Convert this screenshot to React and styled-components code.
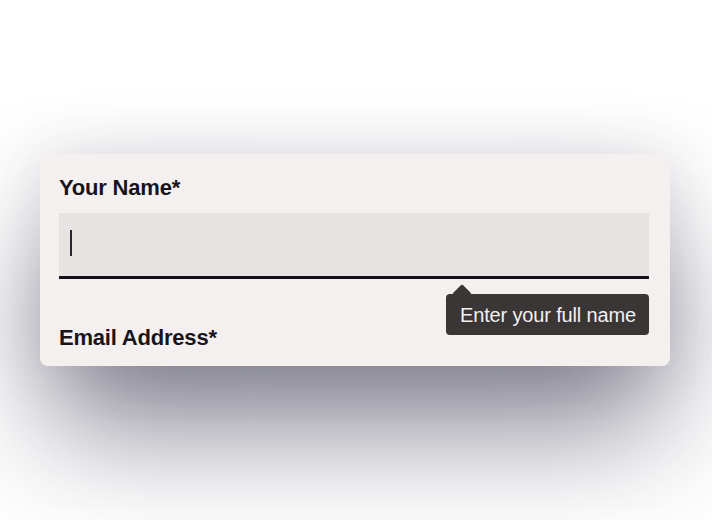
import React from "react";
import styled, { createGlobalStyle } from "styled-components";

const Global = createGlobalStyle`
  html, body { margin: 0; padding: 0; background: #ffffff; }
  body { font-family: "Liberation Sans", Arial, sans-serif; -webkit-font-smoothing: antialiased; }
  * { box-sizing: border-box; }
`;

const Page = styled.div`
  width: 712px;
  height: 520px;
  padding: 154px 42px 0 40px;
  overflow: hidden;
`;

const Card = styled.form`
  width: 630px;
  background: #f3f0ef;
  border-radius: 8px;
  padding: 22px 21px 16px 19px;
  display: flex;
  flex-direction: column;
  box-shadow: 0 70px 120px -10px rgba(50, 48, 72, 0.62), 0 0 60px rgba(60, 58, 80, 0.14);
`;

const Label = styled.label`
  display: block;
  font-size: 22px;
  line-height: 24px;
  font-weight: 700;
  letter-spacing: -0.2px;
  color: #17141c;
`;

const Field = styled.div`
  position: relative;
  margin-top: 13px;
  margin-bottom: 47px;
`;

const InputBox = styled.div`
  height: 66px;
  background: #e7e3e2;
  border-bottom: 3px solid #15111c;
  display: flex;
  align-items: center;
  padding: 0 0 4px 11px;
`;

const Caret = styled.span`
  display: block;
  width: 1.5px;
  height: 26px;
  background: #2a262e;
`;

const Tooltip = styled.div`
  position: absolute;
  top: 81px;
  right: 0;
  height: 41px;
  padding: 0 13px 0 14px;
  display: flex;
  align-items: center;
  background: #3a3636;
  color: #f4f0ef;
  border-radius: 4px;
  font-size: 20px;
  letter-spacing: -0.15px;
  white-space: nowrap;
  &::before {
    content: "";
    position: absolute;
    left: 9px;
    top: -7px;
    width: 14px;
    height: 14px;
    background: #3a3636;
    border-radius: 2px;
    transform: rotate(45deg);
  }
`;

const TipText = styled.span`
  position: relative;
  padding-top: 1px;
`;

export default function App() {
  return (
    <>
      <Global />
      <Page>
        <Card onSubmit={(e) => e.preventDefault()}>
          <Label>Your Name*</Label>
          <Field>
            <InputBox>
              <Caret />
            </InputBox>
            <Tooltip role="tooltip">
              <TipText>Enter your full name</TipText>
            </Tooltip>
          </Field>
          <Label>Email Address*</Label>
        </Card>
      </Page>
    </>
  );
}
